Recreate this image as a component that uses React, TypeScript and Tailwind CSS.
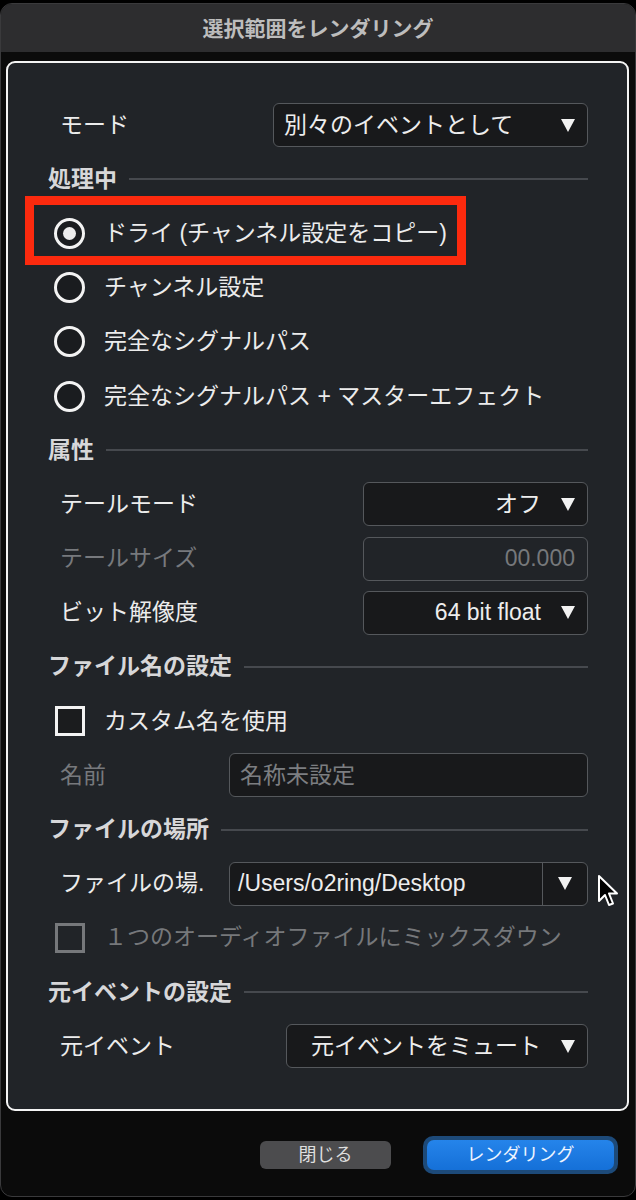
import type { ReactNode } from 'react'

function Caret() {
  return (
    <svg width="14" height="13" viewBox="0 0 14 13" className="shrink-0">
      <path d="M0 0H14L7 13Z" fill="#f2f2f2" />
    </svg>
  )
}

function Section({ title }: { title: string }) {
  return (
    <div className="flex h-[54.2px] items-center gap-[12px]">
      <span className="font-bold text-[#d7d7d9]">{title}</span>
      <div className="h-[2px] flex-1 bg-[#46494e]" />
    </div>
  )
}

function Radio({ checked = false }: { checked?: boolean }) {
  return (
    <div className="flex h-[31px] w-[31px] shrink-0 items-center justify-center rounded-full border-[3.5px] border-[#f3f3f3] bg-[#1a1c1f]">
      {checked ? <div className="h-[13px] w-[13px] rounded-full bg-[#ececec]" /> : null}
    </div>
  )
}

function RadioRow({ label, checked, children }: { label: string; checked?: boolean; children?: ReactNode }) {
  return (
    <div className="relative flex h-[54.2px] items-center gap-[19px] pl-[6px]">
      <Radio checked={checked} />
      <span className="text-[#ececec]">{label}</span>
      {children}
    </div>
  )
}

function FieldRow({ label, muted = false, children }: { label: string; muted?: boolean; children: ReactNode }) {
  return (
    <div className="relative flex h-[54.2px] items-center pl-[12px]">
      <span className={muted ? 'flex-1 text-[#77797d]' : 'flex-1 text-[#ececec]'}>{label}</span>
      {children}
    </div>
  )
}

function Box({ width, className, children }: { width: string; className: string; children?: ReactNode }) {
  return (
    <div
      className={`flex h-[44px] items-center rounded-[6px] border-[1.5px] border-[#55585c] bg-[#18191b] ${width} ${className}`}
    >
      {children}
    </div>
  )
}

export default function App() {
  return (
    <div className="h-[1200px] w-[636px] overflow-hidden bg-black pt-[3px] font-['Liberation_Sans','Noto_Sans_CJK_JP',sans-serif] text-[23px] leading-none">
      <div className="flex h-[1194px] flex-col overflow-hidden rounded-[12px] border border-[#3a3a3c] bg-[#0b0b0b]">
        <div className="flex h-[48px] items-center justify-center bg-[#2d2d2f] text-[21px] font-bold text-[#bdbdbd]">
          選択範囲をレンダリング
        </div>

        <div className="ml-[5px] mr-[6px] mt-[9px] flex h-[1050px] flex-col rounded-[9px] border-2 border-[#f4f4f4] bg-[#212428] pl-[40px] pr-[39px] pt-[35px]">
          <FieldRow label="モード">
            <Box width="w-[315px]" className="justify-between pl-[10px] pr-[12px]">
              <span className="text-[#ededed]">別々のイベントとして</span>
              <Caret />
            </Box>
          </FieldRow>

          <Section title="処理中" />
          <RadioRow label="ドライ (チャンネル設定をコピー)" checked>
            <div className="absolute left-[-23px] top-[-10px] h-[69px] w-[441px] border-[9px] border-[#fc2a0e]" />
          </RadioRow>
          <RadioRow label="チャンネル設定" />
          <RadioRow label="完全なシグナルパス" />
          <RadioRow label="完全なシグナルパス + マスターエフェクト" />

          <Section title="属性" />
          <FieldRow label="テールモード">
            <Box width="w-[225px]" className="justify-end gap-[20px] pr-[12px]">
              <span className="text-[#ededed]">オフ</span>
              <Caret />
            </Box>
          </FieldRow>
          <FieldRow label="テールサイズ" muted>
            <Box width="w-[225px]" className="justify-end border-[#46494d] bg-transparent pr-[12px]">
              <span className="text-[#76787b]">00.000</span>
            </Box>
          </FieldRow>
          <FieldRow label="ビット解像度">
            <Box width="w-[225px]" className="justify-end gap-[20px] pr-[12px]">
              <span className="text-[#ededed]">64 bit float</span>
              <Caret />
            </Box>
          </FieldRow>

          <Section title="ファイル名の設定" />
          <div className="flex h-[54.2px] items-center gap-[19px] pl-[7px]">
            <div className="h-[30px] w-[30px] shrink-0 border-[3px] border-[#f3f3f3] bg-[#1b1c1e]" />
            <span className="text-[#ececec]">カスタム名を使用</span>
          </div>
          <FieldRow label="名前" muted>
            <Box width="w-[359px]" className="border-[#47494d] bg-[#1c1d20] pl-[10px]">
              <span className="text-[#7c7e81]">名称未設定</span>
            </Box>
          </FieldRow>

          <Section title="ファイルの場所" />
          <FieldRow label="ファイルの場.">
            <Box width="w-[359px]" className="overflow-hidden">
              <span className="flex-1 pl-[8px] text-[#ededed]">/Users/o2ring/Desktop</span>
              <div className="flex h-full w-[45px] items-center justify-center border-l-[1.5px] border-[#55585c]">
                <Caret />
              </div>
            </Box>
            <svg
              width="22"
              height="34"
              viewBox="0 0 22 34"
              className="absolute left-[549px] top-[17px]"
            >
              <path
                d="M2 2 L2 27 L8 21 L12 31 L16 29.5 L12 19.5 L20 19.5 Z"
                fill="#000"
                stroke="#fff"
                strokeWidth="2"
                strokeLinejoin="round"
              />
            </svg>
          </FieldRow>
          <div className="flex h-[54.2px] items-center gap-[19px] pl-[7px]">
            <div className="h-[30px] w-[30px] shrink-0 border-[3px] border-[#76787b]" />
            <span className="text-[#76787b]">１つのオーディオファイルにミックスダウン</span>
          </div>

          <Section title="元イベントの設定" />
          <FieldRow label="元イベント">
            <Box width="w-[302px]" className="justify-end gap-[20px] pr-[12px]">
              <span className="text-[#ededed]">元イベントをミュート</span>
              <Caret />
            </Box>
          </FieldRow>
        </div>

        <div className="mt-[25px] flex items-center justify-end gap-[32px] pr-[17px]">
          <div className="flex h-[28px] w-[131px] items-center justify-center rounded-[6px] bg-[#4c4c4e] text-[18px] text-[#dedede]">
            閉じる
          </div>
          <div className="rounded-[10px] bg-[#1d4a79] p-[4px]">
            <div className="flex h-[30px] w-[187px] items-center justify-center rounded-[7px] bg-[linear-gradient(#2584ea,#1570d8)] text-[18px] text-[#eef4ff]">
              レンダリング
            </div>
          </div>
        </div>
      </div>
    </div>
  )
}
